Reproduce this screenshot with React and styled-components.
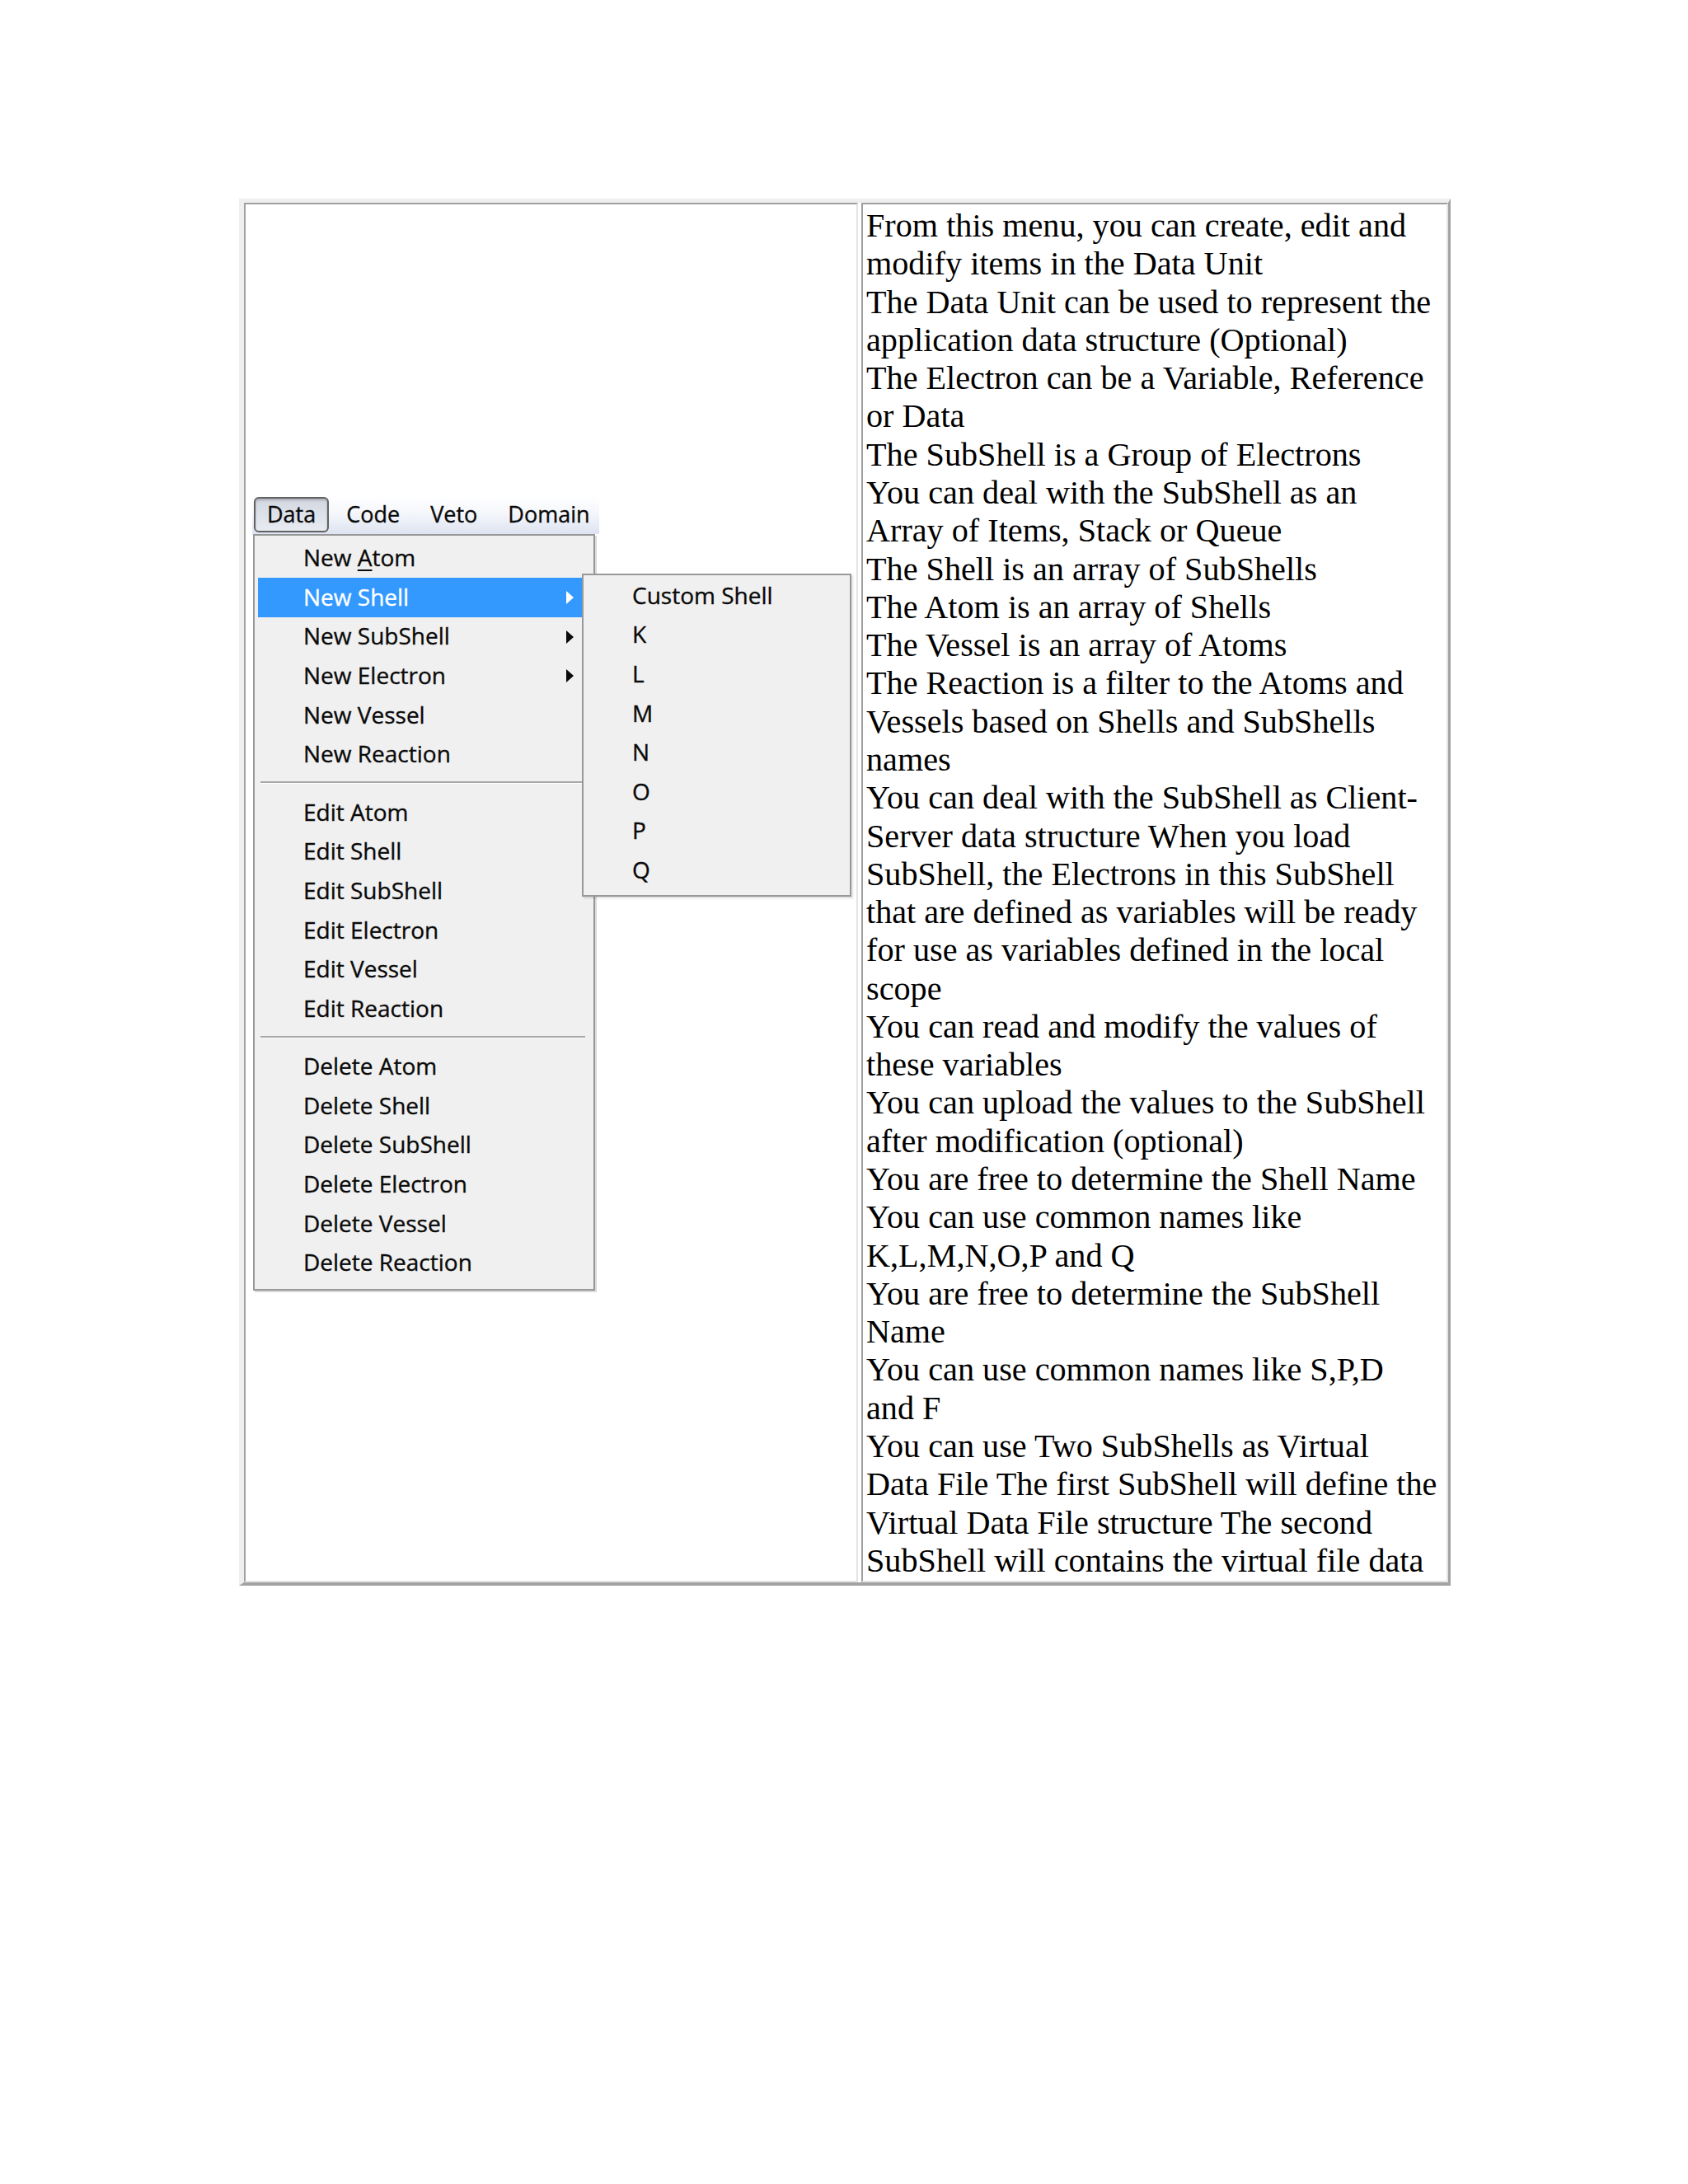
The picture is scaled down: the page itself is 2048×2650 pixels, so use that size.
import React from 'react';
import styled, { createGlobalStyle, css } from 'styled-components';

const notes = [
  ['From this menu, you can create, edit and', 'modify items in the Data Unit'],
  ['The Data Unit can be used to represent the', 'application data structure (Optional)'],
  ['The Electron can be a Variable, Reference', 'or Data'],
  ['The SubShell is a Group of Electrons'],
  ['You can deal with the SubShell as an', 'Array of Items, Stack or Queue'],
  ['The Shell is an array of SubShells'],
  ['The Atom is an array of Shells'],
  ['The Vessel is an array of Atoms'],
  ['The Reaction is a filter to the Atoms and', 'Vessels based on Shells and SubShells', 'names'],
  [
    'You can deal with the SubShell as Client-',
    'Server data structure When you load',
    'SubShell, the Electrons in this SubShell',
    'that are defined as variables will be ready',
    'for use as variables defined in the local',
    'scope',
  ],
  ['You can read and modify the values of', 'these variables'],
  ['You can upload the values to the SubShell', 'after modification (optional)'],
  ['You are free to determine the Shell Name'],
  ['You can use common names like', 'K,L,M,N,O,P and Q'],
  ['You are free to determine the SubShell', 'Name'],
  ['You can use common names like S,P,D', 'and F'],
  [
    'You can use Two SubShells as Virtual',
    'Data File The first SubShell will define the',
    'Virtual Data File structure The second',
    'SubShell will contains the virtual file data',
  ],
];

const menuGroups = [
  [
    { label: 'New Atom', accel: 4 },
    { label: 'New Shell', sub: true, active: true },
    { label: 'New SubShell', sub: true },
    { label: 'New Electron', sub: true },
    { label: 'New Vessel' },
    { label: 'New Reaction' },
  ],
  [
    { label: 'Edit Atom' },
    { label: 'Edit Shell' },
    { label: 'Edit SubShell' },
    { label: 'Edit Electron' },
    { label: 'Edit Vessel' },
    { label: 'Edit Reaction' },
  ],
  [
    { label: 'Delete Atom' },
    { label: 'Delete Shell' },
    { label: 'Delete SubShell' },
    { label: 'Delete Electron' },
    { label: 'Delete Vessel' },
    { label: 'Delete Reaction' },
  ],
];

const shells = ['Custom Shell', 'K', 'L', 'M', 'N', 'O', 'P', 'Q'];
const barItems = ['Data', 'Code', 'Veto', 'Domain'];

function Arrow() {
  return (
    <ArrowIcon width="9" height="16" viewBox="0 0 9 16">
      <polygon points="0,0 9,8 0,16" fill="currentColor" />
    </ArrowIcon>
  );
}

function Label({ text, accel }) {
  if (accel === undefined) return <span>{text}</span>;
  return (
    <span>
      {text.slice(0, accel)}
      <u>{text[accel]}</u>
      {text.slice(accel + 1)}
    </span>
  );
}

export default function App() {
  return (
    <>
      <GlobalStyle />
      <Page>
        <Frame>
          <ShotCell>
            <MenuShot>
              <MenuBar>
                {barItems.map((b, i) => (
                  <BarItem key={b} $open={i === 0}>{b}</BarItem>
                ))}
              </MenuBar>
              <Dropdown>
                {menuGroups.map((group, gi) => (
                  <React.Fragment key={gi}>
                    {gi > 0 && <Separator />}
                    {group.map((item) => (
                      <Row key={item.label} $active={item.active}>
                        <Label text={item.label} accel={item.accel} />
                        {item.sub && <Arrow />}
                      </Row>
                    ))}
                  </React.Fragment>
                ))}
              </Dropdown>
              <Submenu>
                {shells.map((s) => (
                  <Row key={s}>{s}</Row>
                ))}
              </Submenu>
            </MenuShot>
          </ShotCell>
          <TextCell>
            {notes.map((lines, i) => (
              <Para key={i}>
                {lines.map((l, j) => (
                  <Line key={j}>{l}</Line>
                ))}
              </Para>
            ))}
          </TextCell>
        </Frame>
      </Page>
    </>
  );
}

const GlobalStyle = createGlobalStyle`
  body {
    margin: 0;
    background: #ffffff;
  }
`;

const Page = styled.div`
  box-sizing: border-box;
  min-height: 2650px;
  padding: 241px 0 0 290px;
`;

const Frame = styled.div`
  display: flex;
  gap: 4px;
  width: 1470px;
  box-sizing: border-box;
  border-style: solid;
  border-width: 5px 3px 4px 6px;
  border-color: #efefef #a3a3a3 #a3a3a3 #efefef;
`;

const Cell = styled.div`
  box-sizing: border-box;
  border: 2px solid;
  border-color: #a0a0a0 #e4e4e4 #e4e4e4 #a0a0a0;
`;

const ShotCell = styled(Cell)`
  width: 745px;
  display: flex;
  align-items: center;
  padding-left: 8px;
`;

const TextCell = styled(Cell)`
  width: 712px;
  padding: 3px 2px 1px 4px;
  font-family: "Liberation Serif", "Times New Roman", serif;
  font-size: 40.2px;
  line-height: 46.28px;
  color: #000;
`;

const Para = styled.p`
  margin: 0;
`;

const Line = styled.span`
  display: block;
  white-space: nowrap;
`;

const MenuShot = styled.div`
  position: relative;
  width: 728px;
  height: 965px;
  font-family: "Open Sans", "Noto Sans", sans-serif;
  color: #0a0a0a;
  -webkit-text-stroke: 0.35px currentColor;
`;

const MenuBar = styled.div`
  display: flex;
  align-items: center;
  gap: 5px;
  width: 421px;
  height: 47px;
  box-sizing: border-box;
  padding-left: 2px;
  overflow: hidden;
  font-size: 27px;
  background: linear-gradient(#ffffff 0%, #f5f7fb 45%, #dde3f1 100%);
`;

const BarItem = styled.div`
  flex: none;
  height: 43px;
  display: flex;
  align-items: center;
  box-sizing: border-box;
  padding: 0 16px 2px;
  border-radius: 6px;
  ${(p) =>
    p.$open &&
    css`
      padding: 0 14px 2px;
      border: 2px solid #626262;
      background: linear-gradient(#d2d7e1, #e8ebf1);
      box-shadow: inset 0 2px 3px rgba(0, 0, 0, 0.2);
    `}
`;

const Dropdown = styled.div`
  margin-left: 1px;
  width: 415px;
  box-sizing: border-box;
  border: 2px solid #989898;
  background: #f0f0f0;
  padding: 4.3px 4px 7px 4px;
  box-shadow: 2px 2px 0 rgba(0, 0, 0, 0.15);
`;

const Submenu = styled.div`
  position: absolute;
  left: 400px;
  top: 95px;
  z-index: 1;
  width: 327px;
  box-sizing: border-box;
  border: 2px solid #989898;
  background: #f0f0f0;
  padding: 2px 4px 6px 4px;
  box-shadow: 2px 2px 2px rgba(0, 0, 0, 0.12);
`;

const Row = styled.div`
  height: 47.6px;
  box-sizing: border-box;
  display: flex;
  align-items: center;
  padding: 0 0 3px 55px;
  font-size: 28px;
  white-space: nowrap;

  u {
    text-underline-offset: 4px;
    text-decoration-thickness: 2px;
  }

  ${(p) =>
    p.$active &&
    css`
      background: #3399ff;
      color: #ffffff;
    `}
`;

const ArrowIcon = styled.svg`
  margin-left: auto;
  margin-right: 20px;
  margin-top: 3px;
  flex: none;
`;

const Separator = styled.div`
  height: 23px;
  box-sizing: border-box;
  padding: 9px 6px 0 3px;

  &::before {
    content: '';
    display: block;
    height: 2px;
    background: #a8a8a8;
    box-shadow: 0 1px 0 #ffffff;
  }
`;
